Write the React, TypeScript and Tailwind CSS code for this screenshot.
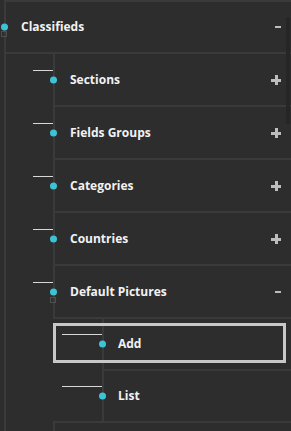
import React from 'react'

type TreeNode = {
  label: string
  open?: boolean
  hasChildren?: boolean
  children?: TreeNode[]
}

const items: TreeNode[] = [
  { label: 'Sections', hasChildren: true },
  { label: 'Fields Groups', hasChildren: true },
  { label: 'Categories', hasChildren: true },
  { label: 'Countries', hasChildren: true },
  {
    label: 'Default Pictures',
    hasChildren: true,
    open: true,
    children: [{ label: 'Add' }, { label: 'List' }],
  },
  // next sibling, only its top edge shows in the panel
  { label: '', hasChildren: true },
]

const Dot = () => (
  <span className="absolute -left-[5px] top-1/2 -translate-y-1/2 w-[7px] h-[7px] rounded-full bg-[#3cc4d6]" />
)

const Toggle: React.FC<{ open?: boolean }> = ({ open }) =>
  open ? (
    <span className="block w-[6px] h-[2px] bg-[#bdbdbd]" />
  ) : (
    <span className="relative block w-[10px] h-[10px]">
      <span className="absolute left-[4px] top-0 w-[3px] h-[10px] bg-[#bdbdbd]" />
      <span className="absolute left-0 top-[4px] w-[10px] h-[3px] bg-[#bdbdbd]" />
    </span>
  )

// heights are border-box (preflight), so rows with a top border get +2px
const rowSize = (level: number, first?: boolean) => {
  if (level === 2) return first ? 'h-[50px] pl-[14px]' : 'h-[52px] pl-[14px] border-t-2'
  return first ? 'h-[51px] pl-[15px]' : 'h-[53px] pl-[15px] border-t-2'
}

const Row: React.FC<{ node: TreeNode; first?: boolean; level: number }> = ({ node, first, level }) => (
  <div className={`relative flex items-center border-l-2 border-[#3a3a3a] pr-[10px] ${rowSize(level, first)}`}>
    <span
      className={`absolute top-1/2 -translate-y-[10px] h-px bg-[#d8d8d8] ${
        level === 2 ? '-left-[42px] w-[40px]' : '-left-[22px] w-[20px]'
      }`}
    />
    <Dot />
    {node.open && (
      <span className="absolute -left-[5px] top-1/2 translate-y-[5px] w-[6px] h-[6px] border border-[#4e4e4e]" />
    )}
    <span className="flex-1 text-[12px] font-bold text-[#f2f2f2]">{node.label}</span>
    {node.hasChildren && <Toggle open={node.open} />}
  </div>
)

export default function App() {
  return (
    <div
      className="relative h-[431px] w-[291px] overflow-hidden bg-[#2d2d2d]"
      style={{ fontFamily: '"Open Sans", "Noto Sans", sans-serif' }}
    >
      <div className="ml-[4px] border-l-2 border-t-2 border-[#3a3a3a]">
        {/* root */}
        <div className="relative flex items-center h-[50px] pl-[15px] pr-[10px]">
          <Dot />
          <span className="absolute -left-[5px] top-1/2 translate-y-[4px] w-[6px] h-[6px] border border-[#4e4e4e]" />
          <span className="flex-1 text-[12px] font-bold text-[#f2f2f2]">Classifieds</span>
          <Toggle open />
        </div>

        <div className="border-t-2 border-[#3a3a3a] pl-[47px]">
          {items.map((item, i) => (
            <div key={i}>
              <Row node={item} first={i === 0} level={1} />
              {item.open && item.children && (
                <div className="relative border-t-2 border-[#3a3a3a] pl-[49px]">
                  <div className="absolute left-0 top-[4px] w-[233px] h-[40px] border-[3px] border-[#c8c8c8] z-10" />
                  {item.children.map((c, j) => (
                    <Row key={c.label} node={c} first={j === 0} level={2} />
                  ))}
                </div>
              )}
            </div>
          ))}
        </div>
      </div>

      {/* panel scrollbar */}
      <div className="absolute right-[1px] top-[17px] w-[4px] h-[107px] bg-[#262626]" />
    </div>
  )
}
